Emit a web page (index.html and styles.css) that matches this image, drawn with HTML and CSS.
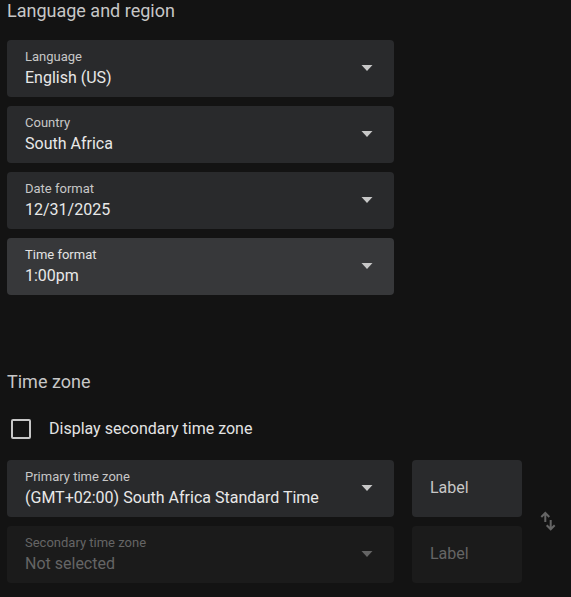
FILE: index.html
```html
<!DOCTYPE html>
<html lang="en">
<head>
<meta charset="utf-8">
<meta name="viewport" content="width=device-width, initial-scale=1">
<title>Settings</title>
<link rel="stylesheet" href="styles.css">
</head>
<body>
<main class="settings">
  <section class="section">
    <h2 class="heading">Language and region</h2>
    <div class="stack">
      <div class="field">
        <label class="field-label" for="language">Language</label>
        <select class="field-select" id="language"><option>English (US)</option></select>
        <svg class="caret" viewBox="0 0 12 6" aria-hidden="true"><path d="M0.5 0h11L6 6z"/></svg>
      </div>
      <div class="field">
        <label class="field-label" for="country">Country</label>
        <select class="field-select" id="country"><option>South Africa</option></select>
        <svg class="caret" viewBox="0 0 12 6" aria-hidden="true"><path d="M0.5 0h11L6 6z"/></svg>
      </div>
      <div class="field">
        <label class="field-label" for="date-format">Date format</label>
        <select class="field-select" id="date-format"><option>12/31/2025</option></select>
        <svg class="caret" viewBox="0 0 12 6" aria-hidden="true"><path d="M0.5 0h11L6 6z"/></svg>
      </div>
      <div class="field field-active">
        <label class="field-label" for="time-format">Time format</label>
        <select class="field-select" id="time-format"><option>1:00pm</option></select>
        <svg class="caret" viewBox="0 0 12 6" aria-hidden="true"><path d="M0.5 0h11L6 6z"/></svg>
      </div>
    </div>
  </section>

  <section class="section">
    <h2 class="heading">Time zone</h2>
    <label class="check">
      <input class="check-box" type="checkbox">
      <span>Display secondary time zone</span>
    </label>
    <div class="zones">
      <div class="zone-rows">
        <div class="zone-row">
          <div class="field">
            <label class="field-label" for="primary">Primary time zone</label>
            <select class="field-select" id="primary"><option>(GMT+02:00) South Africa Standard Time</option></select>
            <svg class="caret" viewBox="0 0 12 6" aria-hidden="true"><path d="M0.5 0h11L6 6z"/></svg>
          </div>
          <input class="zone-label" type="text" placeholder="Label" aria-label="Label">
        </div>
        <div class="zone-row">
          <div class="field field-disabled">
            <label class="field-label" for="secondary">Secondary time zone</label>
            <select class="field-select" id="secondary" disabled><option>Not selected</option></select>
            <svg class="caret" viewBox="0 0 12 6" aria-hidden="true"><path d="M0.5 0h11L6 6z"/></svg>
          </div>
          <input class="zone-label" type="text" placeholder="Label" aria-label="Label" disabled>
        </div>
      </div>
      <button class="swap" type="button" aria-label="Swap time zones" disabled>
        <svg viewBox="0 0 24 24" width="24" height="24" aria-hidden="true">
          <path d="M9.300 13V4M5.300 8l4-4 4 4M14.700 11v9M10.700 16.300l4 4 4-4"/>
        </svg>
      </button>
    </div>
  </section>
</main>
</body>
</html>
```
FILE: styles.css
```css
* {
  box-sizing: border-box;
}

body {
  margin: 0;
  background: #131313;
  color: #e3e3e3;
  font: 16px/20px Roboto, "Liberation Sans", sans-serif;
}

.settings {
  display: flex;
  flex-direction: column;
  gap: 76px;
  padding: 0 11px 14px 7px;
}

.heading {
  margin: 0;
  color: #c7c7c7;
  font-size: 18px;
  line-height: 22px;
  font-weight: 400;
}

.stack {
  display: grid;
  gap: 9px;
  max-width: 387px;
  margin-top: 18px;
}

.field {
  display: grid;
  align-items: start;
  height: 57px;
  border-radius: 4px;
  background: #292a2c;
  color: #e8e8e8;
}

.field > * {
  grid-area: 1 / 1;
}

.field-label {
  z-index: 1;
  padding: 8px 18px 0;
  color: #c7c7c7;
  font-size: 13px;
  line-height: 18px;
  pointer-events: none;
}

.field-select {
  width: 100%;
  height: 100%;
  min-width: 0;
  margin: 0;
  padding: 19px 44px 0 18px;
  border: 0;
  border-radius: 4px;
  background: transparent;
  color: inherit;
  font: inherit;
  opacity: 1;
  appearance: none;
}

.caret {
  align-self: center;
  justify-self: end;
  width: 12px;
  height: 6px;
  margin: 0 21px 2px 0;
  fill: #c7c7c7;
  pointer-events: none;
}

.field-active {
  background: #37383a;
}

.field-active .field-label {
  color: #e3e3e3;
}

.field-disabled {
  background: #1b1b1b;
  color: #656565;
}

.field-disabled .field-label {
  color: #656565;
}

.field-disabled .caret {
  fill: #656565;
}

.check {
  display: flex;
  align-items: center;
  gap: 18px;
  margin: 26px 0 21px 4px;
}

.check-box {
  width: 20px;
  height: 20px;
  margin: 0;
  border: 2px solid #c7c7c7;
  border-radius: 2px;
  appearance: none;
}

.check-box:checked {
  background: #c7c7c7;
}

.zones {
  display: flex;
  align-items: center;
  gap: 14px;
}

.zone-rows {
  display: grid;
  flex: 0 1 515px;
  gap: 9px;
  min-width: 0;
}

.zone-row {
  display: grid;
  grid-template-columns: minmax(0, 1fr) 110px;
  gap: 18px;
}

.zone-label {
  width: 100%;
  height: 57px;
  padding: 0 18px 2px;
  border: 0;
  border-radius: 4px;
  background: #292a2c;
  color: #e3e3e3;
  font: inherit;
}

.zone-label::placeholder {
  color: #c7c7c7;
  opacity: 1;
}

.zone-label:disabled {
  background: #1b1b1b;
}

.zone-label:disabled::placeholder {
  color: #656565;
}

.swap {
  display: grid;
  flex: none;
  padding: 0 0 2px;
  border: 0;
  background: none;
}

.swap svg {
  fill: none;
  stroke: #656565;
  stroke-width: 2;
}
```
